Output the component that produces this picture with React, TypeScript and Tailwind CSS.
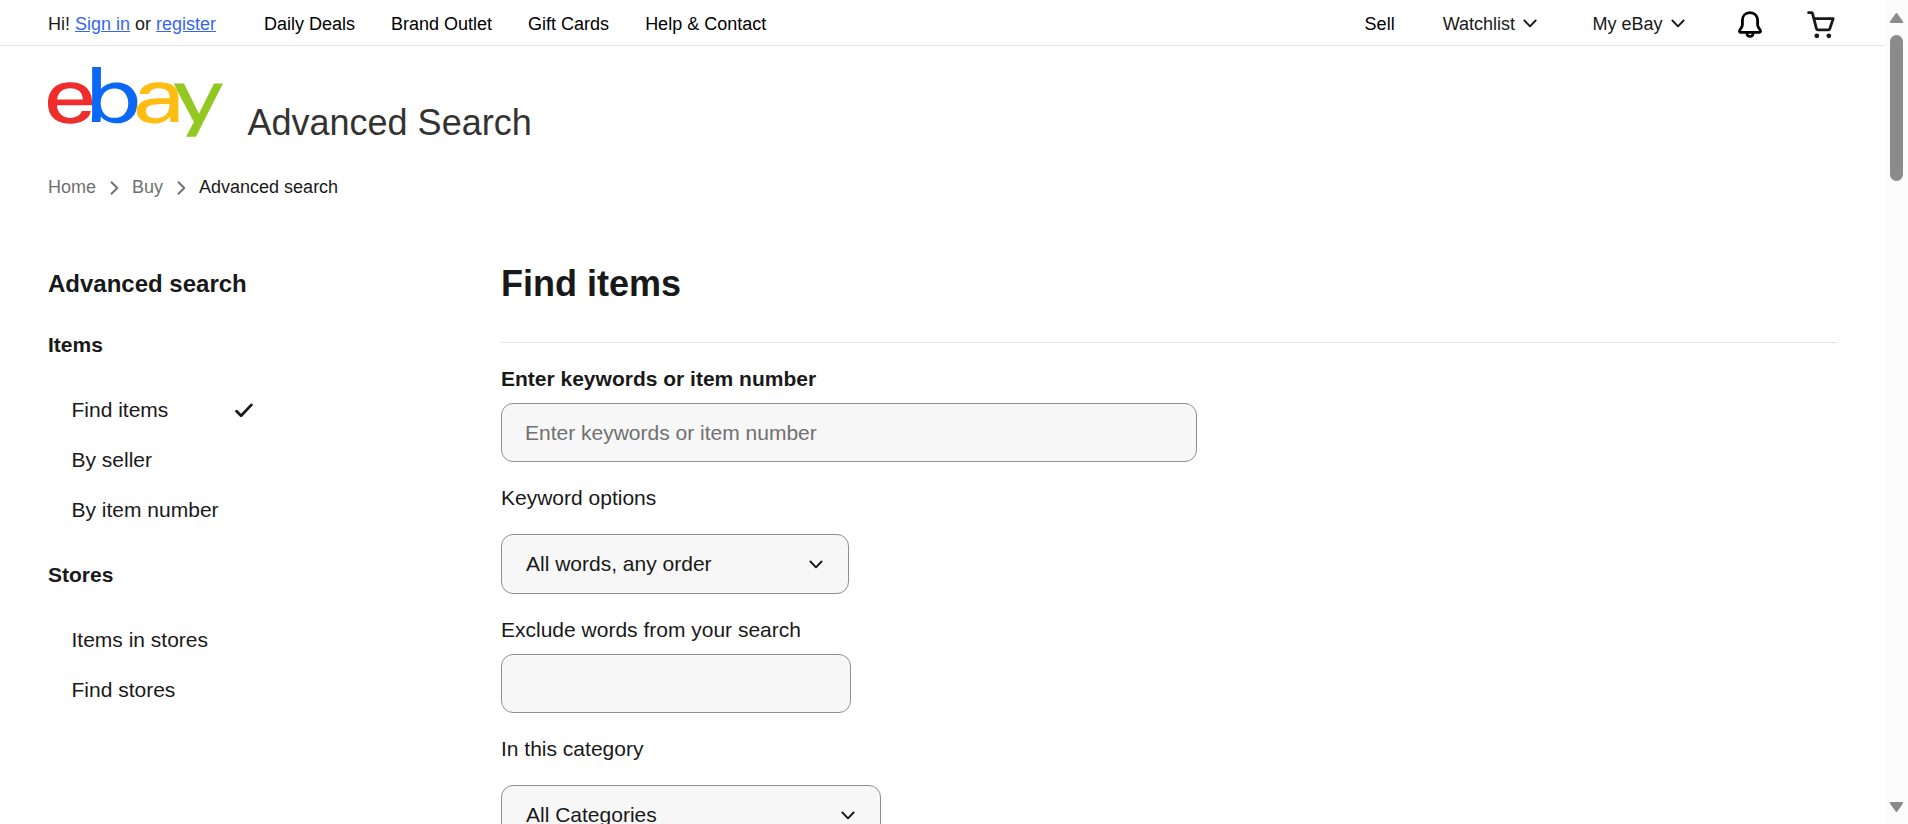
import { SiEbay } from "react-icons/si";

type IconProps = { className?: string };

function ChevronDown({ className }: IconProps) {
  return (
    <svg width="14" height="9" viewBox="0 0 14 9" fill="none" className={className}>
      <path d="M1.4 1.5 7 7.3l5.6-5.8" stroke="#191919" strokeWidth="1.9" strokeLinecap="round" strokeLinejoin="round" />
    </svg>
  );
}

function ChevronRight({ className }: IconProps) {
  return (
    <svg width="9" height="14" viewBox="0 0 9 14" fill="none" className={className}>
      <path d="M1.5 1.3 7.3 7l-5.8 5.7" stroke="#707070" strokeWidth="1.9" strokeLinecap="round" strokeLinejoin="round" />
    </svg>
  );
}

function Bell() {
  return (
    <svg width="24" height="27" viewBox="0 0 24 27" fill="none" stroke="#000" strokeWidth="2.8" strokeLinejoin="round">
      <path d="M12 1.6c-4.700 0-7.600 3.400-7.600 7.800v4.400c0 1.200-.4 2-1.200 3.100l-1.200 1.900c-.9 1.500-.6 2.600.7 2.600h18.600c1.300 0 1.600-1.100.7-2.600l-1.200-1.900c-.8-1.100-1.200-1.900-1.200-3.100V9.400c0-4.400-2.900-7.800-7.600-7.800Z" />
      <path d="M8.800 21.800c0 2.200 1.300 3.700 3.200 3.700s3.200-1.500 3.200-3.700" strokeWidth="2.600" />
    </svg>
  );
}

function Cart() {
  return (
    <svg width="28" height="28" viewBox="0 0 28 28" fill="none">
      <path d="M1.600 1.700h3.100c.4 0 .7.200.8.600l4 15.500c.2.700.7 1.100 1.400 1.100h10.500c.7 0 1.200-.4 1.400-1.100L26.200 7.600H6.800" stroke="#191919" strokeWidth="2.800" strokeLinecap="round" strokeLinejoin="round" />
      <circle cx="9.800" cy="24.800" r="2.400" fill="#191919" />
      <circle cx="21.800" cy="24.800" r="2.400" fill="#191919" />
    </svg>
  );
}

const logoParts = [
  { id: "logo-red", color: "#f02d2d", points: "0,0 44,0 44,72 0,72" },
  { id: "logo-blue", color: "#0968f6", points: "44,0 89.700,0 89.700,35 88.200,44 88.200,72 44,72" },
  { id: "logo-yellow", color: "#ffbd14", points: "89.700,0 125.500,0 125.500,16.400 131,26.900 131,72 88.200,72 88.200,44 89.700,35" },
  { id: "logo-green", color: "#92c821", points: "125.500,0 176,0 176,72 131,72 131,26.900 125.500,16.400" },
];

function Logo({ className }: IconProps) {
  return (
    <svg width="176" height="72" viewBox="0 0 176 72" className={className} aria-label="eBay">
      {logoParts.map(({ id, color, points }) => (
        <g key={id}>
          <clipPath id={id}>
            <polygon points={points} />
          </clipPath>
          <g clipPath={`url(#${id})`}>
            <SiEbay x={0} y={-52.6} size={175} color={color} />
          </g>
        </g>
      ))}
    </svg>
  );
}

function Header() {
  return (
    <header className="flex h-[46px] items-center border-b border-[#e5e5e5] pl-12 text-[18px] leading-[22px] text-[#191919]">
      <p className="w-[216px] pt-0.5">
        Hi! <a className="text-[#3665f3] underline">Sign in</a> or <a className="text-[#3665f3] underline">register</a>
      </p>
      <nav className="flex gap-9 pt-0.5 text-black">
        <a>Daily Deals</a>
        <a>Brand Outlet</a>
        <a>Gift Cards</a>
        <a>Help &amp; Contact</a>
      </nav>
      <div className="ml-auto flex items-center pr-[50px]">
        <a className="pt-0.5 text-black">Sell</a>
        <a className="ml-12 flex items-center gap-[8.5px] pt-0.5">
          Watchlist <ChevronDown />
        </a>
        <a className="ml-[55px] flex items-center gap-[8.5px] pt-0.5">
          My eBay <ChevronDown />
        </a>
        <a className="ml-[53px] pt-[3px]">
          <Bell />
        </a>
        <a className="ml-[45px] pt-1">
          <Cart />
        </a>
      </div>
    </header>
  );
}

function NavGroup({ title, items, active }: { title: string; items: string[]; active?: string }) {
  return (
    <section>
      <h3 className="text-[21px] leading-[30px] font-bold">{title}</h3>
      <ul className="mt-[25px] mb-[25px] pl-[23.5px]">
        {items.map((item) => (
          <li key={item} className="flex h-[50px] w-[181px] items-center justify-between text-[21px] leading-[30px]">
            {item}
            {item === active && (
              <svg width="18" height="15" viewBox="0 0 18 15" fill="none">
                <path d="m1.600 8.200 4.500 4.500L16.400 1.900" stroke="#191919" strokeWidth="2.800" strokeLinecap="round" strokeLinejoin="round" />
              </svg>
            )}
          </li>
        ))}
      </ul>
    </section>
  );
}

function Label({ text, bold }: { text: string; bold?: boolean }) {
  return <label className={bold ? "mt-[21px] block text-[21px] leading-[30px] font-bold" : "mt-[21px] block text-[21px] leading-[30px]"}>{text}</label>;
}

function Select({ value, width }: { value: string; width: string }) {
  return (
    <button className={`mt-[21px] flex h-[60px] items-center justify-between rounded-xl border border-[#8f8f8f] bg-[#f7f7f7] pr-[25px] pl-6 text-[21px] leading-[30px] ${width}`}>
      {value}
      <ChevronDown />
    </button>
  );
}

function Scrollbar() {
  return (
    <div className="flex w-[23px] shrink-0 flex-col items-center justify-between bg-[#fbfbfb] pt-[12px] pb-[11px]">
      <div className="flex flex-col items-center">
        <svg width="15" height="12" viewBox="0 0 15 12">
          <path d="M7.500 2 13.200 10H1.800Z" fill="#8b8b8b" stroke="#8b8b8b" strokeWidth="2" strokeLinejoin="round" />
        </svg>
        <div className="mt-[11px] h-[146px] w-[13px] rounded-full bg-[#8b8b8b]" />
      </div>
      <svg width="15" height="12" viewBox="0 0 15 12">
        <path d="M7.500 10 13.200 2H1.800Z" fill="#8b8b8b" stroke="#8b8b8b" strokeWidth="2" strokeLinejoin="round" />
      </svg>
    </div>
  );
}

export default function App() {
  return (
    <div className="flex h-[824px] w-full overflow-hidden bg-white font-['Liberation_Sans',Arial,sans-serif] text-[#191919]">
      <div className="min-w-0 flex-1">
        <Header />
        <div className="flex pt-[21px] pl-12">
          <Logo className="block" />
          <p className="mt-[36px] ml-[23.5px] text-[36px] leading-[40px] text-[#333]">Advanced Search</p>
        </div>
        <nav className="mt-[30px] flex h-7 items-center pl-12 text-[18px] leading-[28px] text-[#707070]">
          <a>Home</a>
          <ChevronRight className="mt-0.5 mr-[13px] ml-[14px]" />
          <a>Buy</a>
          <ChevronRight className="mt-0.5 mr-[13px] ml-[14px]" />
          <span className="text-[#191919]">Advanced search</span>
        </nav>
        <main className="flex pt-[62px] pr-12 pl-12">
          <aside className="w-[453px] shrink-0">
            <h2 className="mb-[30px] pt-[5px] text-[24px] leading-[32px] font-bold">Advanced search</h2>
            <NavGroup title="Items" items={["Find items", "By seller", "By item number"]} active="Find items" />
            <NavGroup title="Stores" items={["Items in stores", "Find stores"]} />
          </aside>
          <form className="flex-1">
            <h1 className="h-[80px] border-b border-[#e5e5e5] pt-px text-[36px] leading-[40px] font-bold">Find items</h1>
            <Label text="Enter keywords or item number" bold />
            <input
              className="mt-[9px] block h-[59px] w-[696px] rounded-xl border border-[#8f8f8f] bg-[#f7f7f7] px-[23px] text-[21px] placeholder:text-[#707070]"
              placeholder="Enter keywords or item number"
            />
            <Label text="Keyword options" />
            <Select value="All words, any order" width="w-[348px]" />
            <Label text="Exclude words from your search" />
            <input className="mt-[9px] block h-[59px] w-[350px] rounded-xl border border-[#8f8f8f] bg-[#f7f7f7] px-[23px] text-[21px]" />
            <Label text="In this category" />
            <Select value="All Categories" width="w-[380px]" />
          </form>
        </main>
      </div>
      <Scrollbar />
    </div>
  );
}
